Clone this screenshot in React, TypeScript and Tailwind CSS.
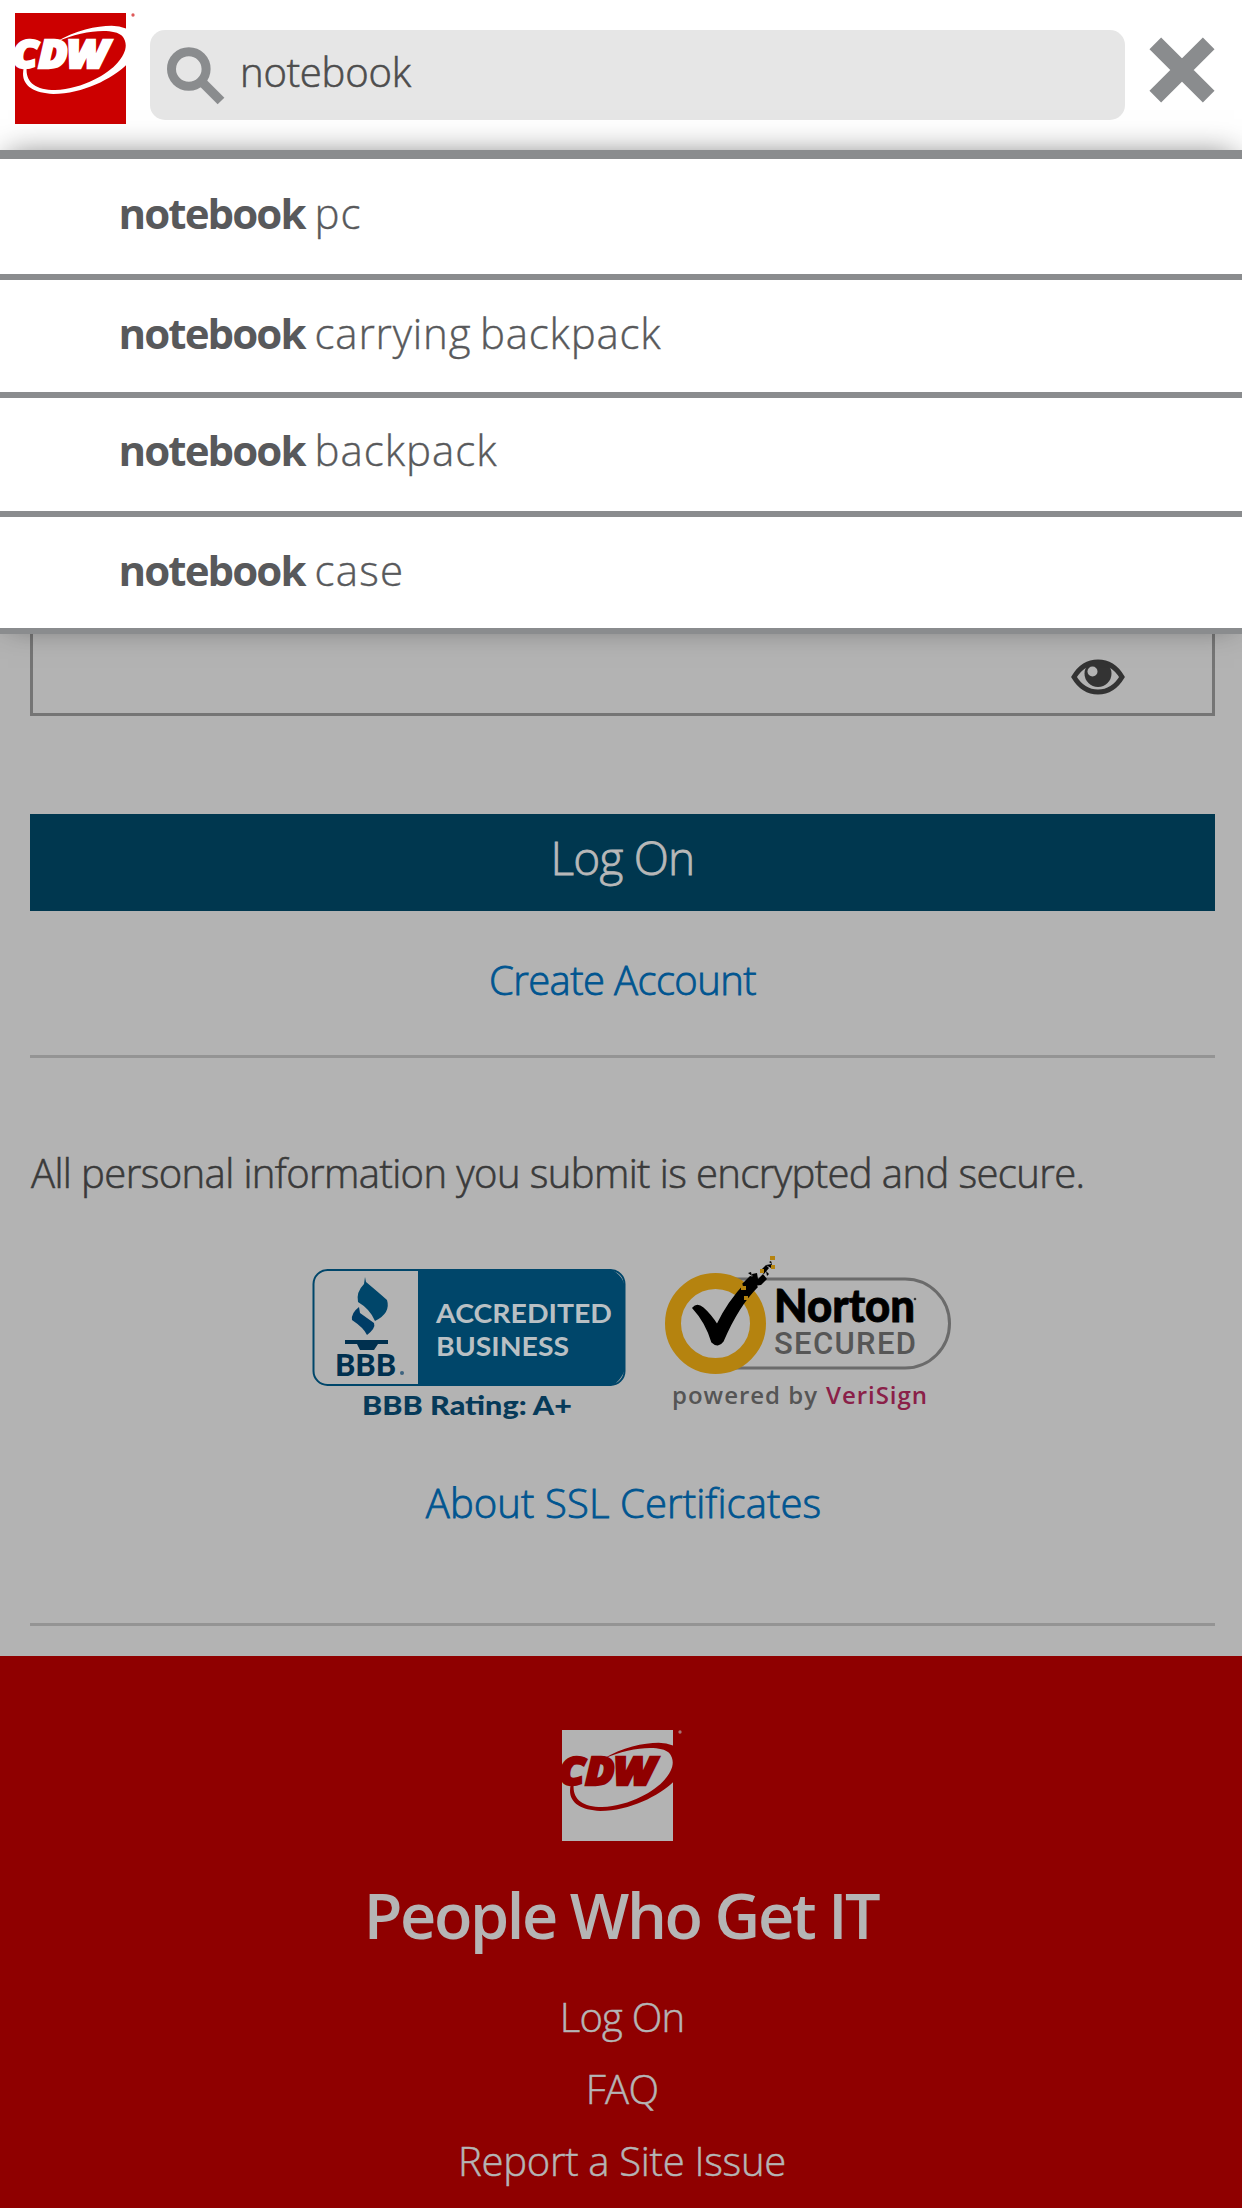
const suggestions = [
  { rest: "pc", row: "h-[121px] pt-[24px]", text: "tracking-[1px]" },
  { rest: "carrying backpack", row: "h-[118px] pt-[23px]", text: "tracking-[0.8px] [word-spacing:-3px]" },
  { rest: "backpack", row: "h-[119px] pt-[22px]", text: "tracking-[1px]" },
  { rest: "case", row: "h-[117px] pt-[23px]", text: "tracking-[1.2px]" },
];

const footerLinks = [
  { label: "Log On", cls: "tracking-[-0.8px]" },
  { label: "FAQ", cls: "tracking-[-0.7px]" },
  { label: "Report a Site Issue", cls: "tracking-[-0.3px]" },
];

function CdwLogo({ box, ink }: { box: string; ink: string }) {
  return (
    <svg viewBox="45 40 363 333" className="h-[111px] w-[121px] shrink-0">
      <clipPath id={"sq" + box.slice(1)}>
        <rect x="45" y="40" width="333" height="333" />
      </clipPath>
      <rect x="45" y="40" width="333" height="333" fill={box} />
      <g clipPath={`url(#sq${box.slice(1)})`} fill={ink}>
        <path d="M168 127C225 92 290 78 335 78Q360 79 380 87V195C340 235 250 283 160 283C95 281 58 252 72 203L80 203C76 246 105 271 165 271C250 268 325 222 352 190C378 160 386 132 366 108C340 84 250 90 168 127Z" />
        <g
          fontFamily="Open Sans, sans-serif"
          fontWeight="800"
          fontStyle="italic"
          fontSize="114"
          stroke={ink}
          strokeWidth="7"
        >
          <text x="36" y="204" textLength="78" lengthAdjust="spacingAndGlyphs">C</text>
          <text x="115" y="204" textLength="88" lengthAdjust="spacingAndGlyphs">D</text>
          <text x="199" y="204" textLength="126" lengthAdjust="spacingAndGlyphs">W</text>
        </g>
      </g>
      <circle cx="399" cy="46" r="5" fill={box} opacity="0.65" />
    </svg>
  );
}

function BbbSeal() {
  return (
    <svg viewBox="300 1260 340 170" className="h-[170px] w-[340px]" fontFamily="Lato, sans-serif">
      <rect x="313.5" y="1270" width="311" height="115" rx="14" fill="#b3b3b3" stroke="#00466a" strokeWidth="2" />
      <path d="M418 1269H609Q614 1270 619 1275T625 1288V1368Q624 1374 619 1380T607 1386H418Z" fill="#00466a" />
      <path d="M365 1277L366 1282Q378 1292 387 1300Q391 1313 375 1321Q370 1309 358 1302Q356 1292 364 1284Z" fill="#00466a" />
      <path d="M359 1307L360 1313L374 1323Q376 1328 367 1335Q364 1328 352 1320Q351 1313 359 1307Z" fill="#003c66" />
      <path d="M345 1340H388V1344H378L374 1350H360L357 1344H345Z" fill="#00304f" />
      <text x="335" y="1376" fontSize="30" fontWeight="900" fill="#00304f" textLength="61" lengthAdjust="spacingAndGlyphs">BBB</text>
      <circle cx="402" cy="1373" r="2" fill="#3e6480" />
      <text x="436" y="1323" fontSize="27" fontWeight="700" fill="#b9c0c4" textLength="176" lengthAdjust="spacingAndGlyphs">ACCREDITED</text>
      <text x="436" y="1355.500" fontSize="27" fontWeight="700" fill="#b9c0c4" textLength="133" lengthAdjust="spacingAndGlyphs">BUSINESS</text>
      <text x="362" y="1415" fontSize="27" fontWeight="900" fill="#063a59" textLength="210" lengthAdjust="spacingAndGlyphs">BBB Rating: A+</text>
    </svg>
  );
}

function NortonSeal() {
  return (
    <svg viewBox="640 1250 320 170" className="h-[170px] w-[320px]">
      <path d="M720 1279H905A44.500 44.500 0 0 1 905 1368H720" fill="none" stroke="#6b6b6b" strokeWidth="3" />
      <circle cx="715.500" cy="1323.500" r="42.500" fill="#b3b3b3" stroke="#b5830f" strokeWidth="16" />
      <path d="M693 1308Q697 1303 703 1308Q711 1315 717 1325Q728 1302 746 1283L754 1280L757 1287Q738 1306 723 1341Q718 1348 712 1342Q706 1322 693 1308Z" fill="#000" stroke="#000" strokeWidth="1.500" />
      <path d="M742 1284l8-8 5 1 3 8-8 6zM752 1274l5-1 1 6 5-5 4 5-6 6-7 1zM760 1271l6-6 3 3-5 6zM767 1276l-1-5 3 3zM766 1265l6-1-1 4zM748 1273l3-1 1 4zM769 1262l2-1 1 3z" fill="#000" />
      <path d="M741 1286h5v4h-5zM744 1296h4v4h-4zM760 1269h4v4h-4zM770 1256h5v4h-5zM771 1265h4v4h-4z" fill="#b5830f" />
      <text x="774" y="1322" fontFamily="Lato, sans-serif" fontWeight="900" fontSize="45" fill="#000" stroke="#000" strokeWidth="0.800" textLength="141" lengthAdjust="spacingAndGlyphs">Norton</text>
      <circle cx="915" cy="1299" r="1.300" fill="#333" />
      <text x="774" y="1354" fontFamily="Roboto, sans-serif" fontWeight="500" fontSize="31" fill="#565656" textLength="142" lengthAdjust="spacing">SECURED</text>
      <g fontFamily="Open Sans, sans-serif" fontWeight="600" fontSize="24">
        <text x="672" y="1404" fill="#555" textLength="145" lengthAdjust="spacing">powered by</text>
        <text x="826" y="1404" fill="#8a2048" textLength="101" lengthAdjust="spacing">VeriSign</text>
      </g>
    </svg>
  );
}

export default function App() {
  return (
    <div className="flex h-[2208px] w-[1242px] flex-col overflow-hidden bg-[#b3b3b3] font-['Open_Sans',sans-serif] text-[40px] leading-[60px]">
      <header className="flex h-[150px] shrink-0 items-start bg-white pt-[13px] pl-[15px]">
        <CdwLogo box="#cc0000" ink="#ffffff" />
        <div className="mt-[17px] ml-[14px] flex h-[90px] w-[975px] rounded-[15px] bg-[#e6e6e6]">
          <svg viewBox="0 0 58 58" className="mt-[17px] ml-[17px] size-[58px]" fill="none" stroke="#8a8c8e">
            <circle cx="21.800" cy="22" r="17.300" strokeWidth="9" />
            <path d="M35 35L54 54" strokeWidth="9.500" />
          </svg>
          <span className="mt-[12px] ml-[15px] font-light tracking-[-0.2px] text-[#4d4d4d] [-webkit-text-stroke:0.6px]">notebook</span>
        </div>
        <svg viewBox="0 0 66 66" className="mt-[24px] ml-[24px] size-[66px]" stroke="#8a8c8e" strokeWidth="16.500">
          <path d="M6.300 6.300L59.700 59.700M59.700 6.300L6.300 59.700" />
        </svg>
      </header>

      <ul className="relative shrink-0 border-t-[9px] border-[#8a8c8e] bg-white text-[42px] text-[#58595b] shadow-[0_-3px_30px_-8px_rgba(0,0,0,0.55)]">
        {suggestions.map((s) => (
          <li key={s.rest} className={`border-b-[6px] border-[#8a8c8e] pl-[118.5px] ${s.row}`}>
            <b className="tracking-[-1.9px]">notebook</b>
            <span className={`ml-[10px] font-light [-webkit-text-stroke:0.4px] ${s.text}`}>{s.rest}</span>
          </li>
        ))}
      </ul>

      <main className="flex h-[1022px] shrink-0 flex-col items-center pr-[27px] pl-[30px] text-[#005590]">
        <div className="flex h-[82px] w-full justify-end border-x-[3px] border-b-[3px] border-[#757575] pr-[87px]">
          <svg viewBox="0 0 54 36" className="mt-[25px] h-[36px] w-[54px]">
            <path d="M3 18Q12 3 27 3T51 18Q42 33 27 33T3 18Z" fill="none" stroke="#333" strokeWidth="5" />
            <circle cx="27" cy="14.500" r="13.500" fill="#333" />
            <circle cx="21.500" cy="12.500" r="5" fill="#b3b3b3" />
          </svg>
        </div>
        <div className="mt-[98px] flex h-[97px] w-full justify-center bg-[#00374f] pt-[13px] text-[46px] font-light tracking-[-0.8px] text-[#b8b8b8] [-webkit-text-stroke:0.8px]">
          Log On
        </div>
        <a className="mt-[39px] font-light tracking-[-0.6px] [-webkit-text-stroke:0.8px]">Create Account</a>
        <hr className="mt-[45px] w-full border-t-[3px] border-[#949494]" />
        <p className="mt-[85px] w-full pl-[1px] font-light tracking-[-0.6px] whitespace-nowrap text-[#3a3a3a] [-webkit-text-stroke:0.6px]">
          All personal information you submit is encrypted and secure.
        </p>
        <div className="mt-[57px] flex h-[170px] w-full pl-[270px]">
          <BbbSeal />
          <div className="-mt-[10px]">
            <NortonSeal />
          </div>
        </div>
        <a className="mt-[43px] pl-[2px] font-light tracking-[0.1px] [-webkit-text-stroke:0.8px]">About SSL Certificates</a>
        <hr className="mt-[90px] w-full border-t-[3px] border-[#949494]" />
      </main>

      <footer className="flex flex-1 flex-col items-center bg-[#8f0000] pt-[74px] text-[#b5b5b5]">
        <div className="pl-[3px]">
          <CdwLogo box="#b3b3b3" ink="#8f0000" />
        </div>
        <h2 className="mt-[39px] text-[63px] leading-[70px] font-semibold tracking-[-2.400px]">People Who Get IT</h2>
        <nav className="mt-[37px] flex flex-col items-center gap-[12px] pl-[2px] font-light [-webkit-text-stroke:0.5px]">
          {footerLinks.map((l) => (
            <a key={l.label} className={l.cls}>
              {l.label}
            </a>
          ))}
        </nav>
      </footer>
    </div>
  );
}
